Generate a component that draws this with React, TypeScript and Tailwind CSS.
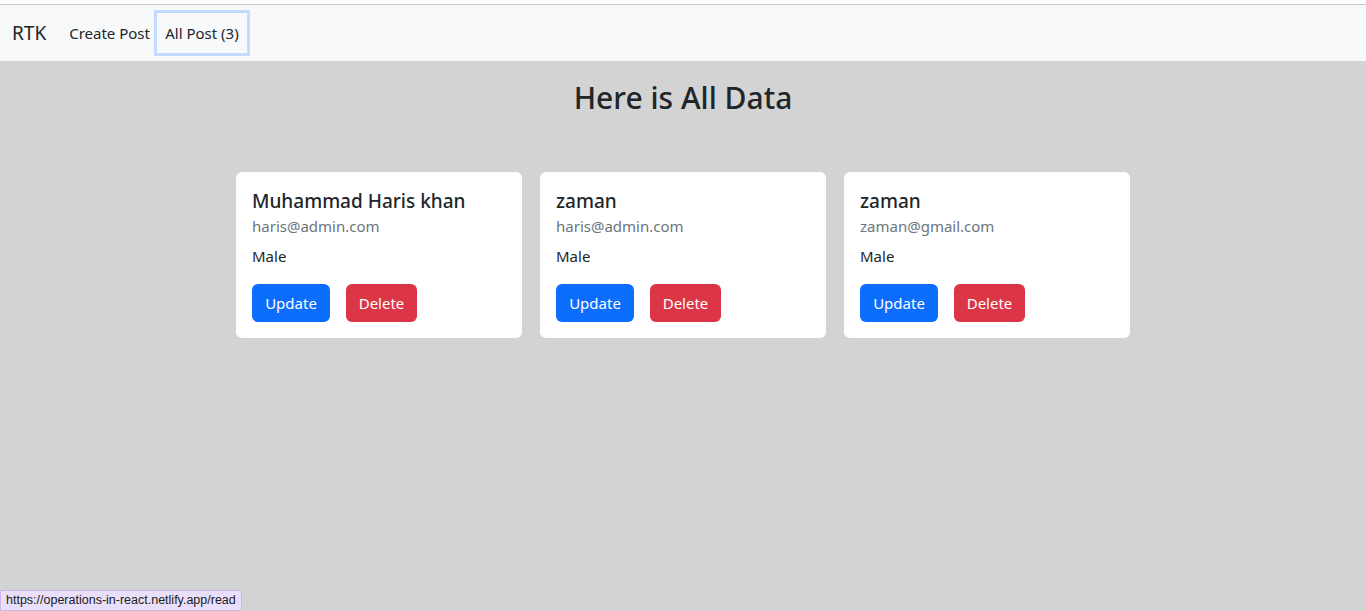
const posts = [
  { name: 'Muhammad Haris khan', email: 'haris@admin.com', gender: 'Male' },
  { name: 'zaman', email: 'haris@admin.com', gender: 'Male' },
  { name: 'zaman', email: 'zaman@gmail.com', gender: 'Male' },
];

export default function App() {
  return (
    <div className="relative min-h-[611px] bg-[#d3d3d3] text-[#212529] font-['Noto_Sans',sans-serif]">
      <div className="h-[5px] bg-white border-b border-[#c8c8c8]" />

      {/* Navbar */}
      <nav className="h-[56px] bg-[#f8f9fa] flex items-center px-3">
        <span className="text-[19px] mr-[23px] text-[#212529]">RTK</span>
        <a className="text-[15px] whitespace-nowrap text-[#212529]">Create Post</a>
        <a className="ml-[4px] h-[46px] w-[96px] shrink-0 flex items-center justify-center whitespace-nowrap border-[3px] border-[#c2dbfe] text-[15px] text-[#212529]">
          All Post (3)
        </a>
      </nav>

      <h1 className="text-center text-[30px] font-medium leading-[38px] mt-[18px]">Here is All Data</h1>

      <div className="flex justify-center gap-[18px] mt-[55px]">
        {posts.map((p, i) => (
          <div key={i} className="w-[286px] bg-white rounded-[6px] px-4 pt-[17px] pb-4">
            <h5 className="text-[19px] font-medium leading-[24px]">{p.name}</h5>
            <h6 className="text-[15px] text-[#6c757d] leading-[24px] mt-[1px]">{p.email}</h6>
            <p className="text-[15px] leading-[24px] mt-[6px]">{p.gender}</p>
            <div className="flex gap-4 mt-4">
              <button className="h-[38px] w-[78px] rounded-[6px] bg-[#0d6efd] text-white text-[15px]">Update</button>
              <button className="h-[38px] w-[71px] rounded-[6px] bg-[#dc3545] text-white text-[15px]">Delete</button>
            </div>
          </div>
        ))}
      </div>

      {/* Browser status bubble */}
      <div className="absolute left-0 bottom-0 h-[21px] px-[5px] flex items-center bg-[#eadffb] border border-[#c9b8e8] rounded-tr-[3px] text-[12.5px] text-[#202020] font-['Liberation_Sans',sans-serif]">
        https://operations-in-react.netlify.app/read
      </div>
    </div>
  );
}
